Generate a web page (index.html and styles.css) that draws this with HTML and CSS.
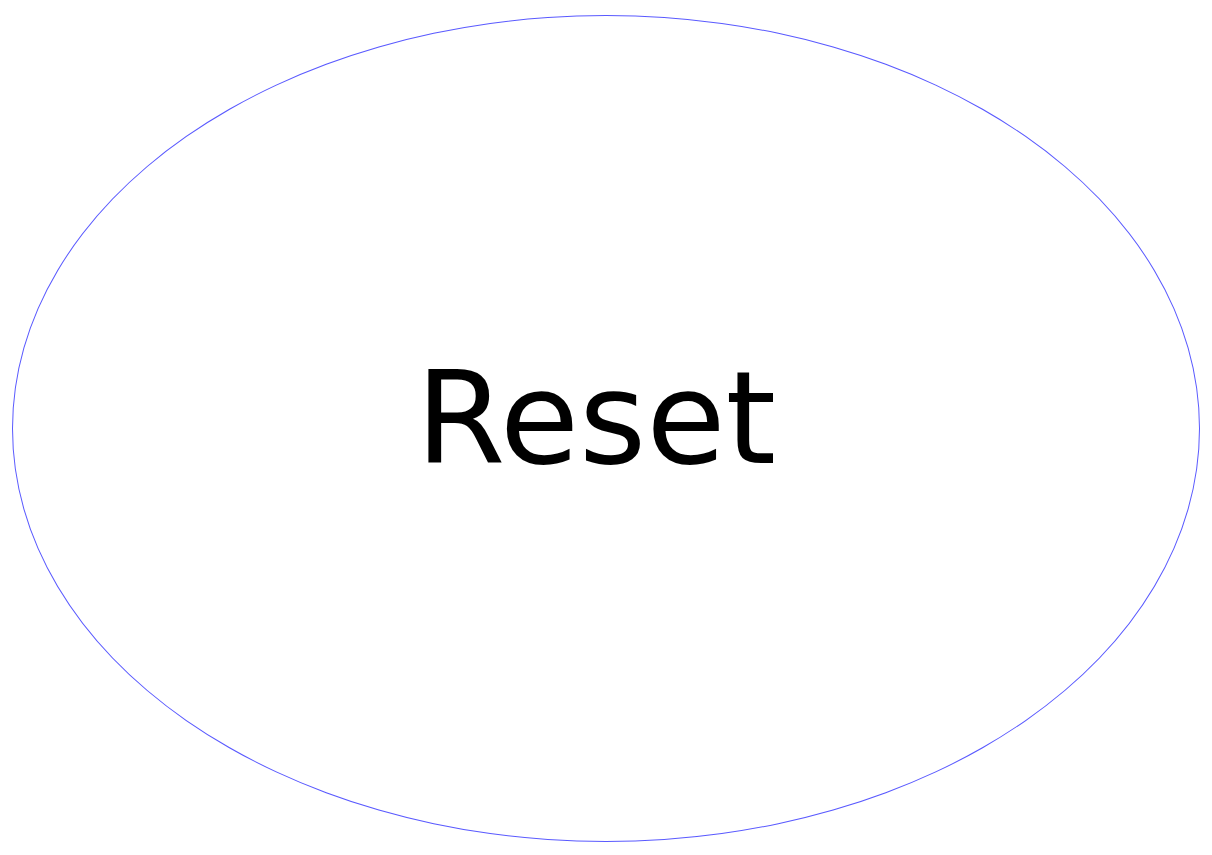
FILE: index.html
```html
<!DOCTYPE html>
<html>
<head>
<meta charset="utf-8">
<link rel="stylesheet" href="styles.css">
</head>
<body>
<div class="reset-button"><span class="label">Reset</span></div>
</body>
</html>
```
FILE: styles.css
```css
html, body {
  margin: 0;
  padding: 0;
  background: #ffffff;
}
body {
  width: 1212px;
  height: 855px;
  padding: 15px 12px 0 12px;
  box-sizing: border-box;
}
.reset-button {
  width: 1188px;
  height: 827px;
  box-sizing: border-box;
  border: 0.5px solid #5a5aff;
  border-radius: 50%;
  display: flex;
  align-items: center;
  justify-content: center;
  font-family: "DejaVu Sans", sans-serif;
  font-size: 129px;
  color: #000;
}
.label {
  line-height: 1;
  margin-top: -20px;
  margin-right: 20px;
}
```
